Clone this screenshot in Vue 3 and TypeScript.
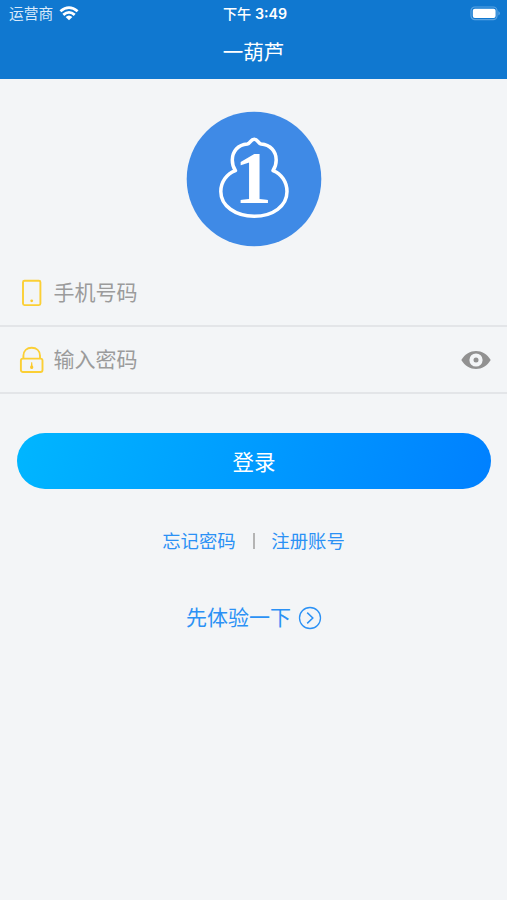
<script setup lang="ts">
import { ref } from 'vue'

const phone = ref('')
const password = ref('')
const passwordVisible = ref(false)
</script>

<template>
  <main class="screen">
    <header class="header">
      <div class="status">
        <div class="carrier">
          <span>运营商</span>
          <svg class="wifi" width="20" height="15" viewBox="0 0 20 15" fill="none" stroke="#fff" stroke-width="2.8">
            <path d="M1.4 5.3Q10 -2 18.6 5.3" />
            <path d="M4.3 8.9Q10 3.9 15.7 8.9" />
            <path d="M6.6 11Q10 8 13.4 11L10 14.2Z" fill="#fff" stroke="none" />
          </svg>
        </div>
        <span class="time">下午 <b>3:49</b></span>
        <svg class="battery" width="31" height="15" viewBox="0 0 31 15">
          <rect x="1" y="1" width="26" height="12.6" rx="3.8" fill="none" stroke="#5ba4e2" stroke-width="1.2" />
          <rect x="2.8" y="2.8" width="22.8" height="9.2" rx="2" fill="#fff" />
          <path d="M28.5 5Q31 7.3 28.5 9.6Z" fill="#72b2e8" />
        </svg>
      </div>
      <h1 class="title">一葫芦</h1>
    </header>

    <svg class="logo" width="136" height="136" viewBox="-1 -1 136 136">
      <circle cx="67" cy="67" r="67.3" fill="#3f8ae6" />
      <path
        d="M67.2 27.2C63.5 27.2 63.6 31.3 60.3 32C51 32.6 45.3 39.5 45.3 48C45.3 52.5 46.2 55.5 48.4 58.6C39.5 62 33.8 70 33.8 79.5C33.8 94 48.5 104.2 67.2 104.2C86 104.2 100 94 100 79.5C100 70 94.6 62 86 58.6C88.2 55.5 89.2 52.5 89.2 48C89.2 39.5 83.4 32.6 74.1 32C70.8 31.3 71 27.2 67.2 27.2Z"
        fill="none" stroke="#fff" stroke-width="3.5" stroke-linejoin="round"
      />
      <text class="logo-digit" x="66.2" y="91" text-anchor="middle">1</text>
    </svg>

    <form class="form" @submit.prevent>
      <label class="field">
        <svg class="field-icon" width="26" height="30" viewBox="0 0 26 30" fill="none" stroke="#fbcf35" stroke-width="1.9">
          <rect x="4" y="2.7" width="17.4" height="24.4" rx="1.5" />
          <circle cx="12.7" cy="22.8" r="1.4" fill="#fbc92c" stroke="none" />
        </svg>
        <input v-model="phone" type="tel" placeholder="手机号码" />
      </label>
      <div class="field">
        <svg class="field-icon" width="26" height="30" viewBox="0 0 26 30" fill="none" stroke="#fbcf35" stroke-width="1.9">
          <path d="M4.4 14V10.8C4.4 5.7 8 2.7 12.7 2.7S21 5.7 21 10.8V14" />
          <rect x="1.9" y="13.6" width="21.6" height="13.4" rx="2" />
          <path d="M12.2 17.2H13.2L13.5 20.5Q14.3 21.2 14.3 22.5Q14.2 24 12.7 24T11.1 22.5Q11.1 21.2 11.9 20.5Z" fill="#fbc92c" stroke="none" />
        </svg>
        <input v-model="password" :type="passwordVisible ? 'text' : 'password'" placeholder="输入密码" />
        <button class="eye" type="button" aria-label="显示密码" @click="passwordVisible = !passwordVisible">
          <svg width="30" height="20" viewBox="0 0 30 20">
            <path d="M0.3 10C7.3 -2 22.7 -2 29.7 10C22.7 22 7.3 22 0.3 10Z" fill="#919191" />
            <circle cx="15" cy="10" r="6.6" fill="#f3f5f7" />
            <circle cx="15" cy="10" r="2.5" fill="#919191" />
          </svg>
        </button>
      </div>
      <button class="submit" type="submit">登录</button>
    </form>

    <nav class="links">
      <a>忘记密码</a>
      <i class="divider" />
      <a>注册账号</a>
    </nav>
    <a class="trial">
      <span>先体验一下</span>
      <svg width="24" height="24" viewBox="0 0 24 24" fill="none" stroke="#2b91f5" stroke-width="1.3">
        <circle cx="12" cy="12" r="10.5" />
        <path d="M9.2 6.6L14.8 12L9.2 17.4" stroke-width="1.5" />
      </svg>
    </a>
  </main>
</template>

<style>
body {
  background: #f3f5f7;
}
</style>

<style scoped>
.screen {
  display: flex;
  flex-direction: column;
  align-items: center;
  min-height: 900px;
  background: #f3f5f7;
  font-family: Inter, 'Noto Sans CJK SC', sans-serif;
}
.header {
  width: 100%;
  height: 79px;
  box-sizing: border-box;
  background: #1078d0;
  color: #fff;
}
.status {
  display: grid;
  grid-template-columns: 1fr auto 1fr;
  align-items: center;
  height: 27px;
  padding: 0 6px 0 9px;
  font-size: 14.7px;
  line-height: 27px;
}
.carrier {
  display: flex;
  align-items: center;
  gap: 6px;
  color: #d9eafa;
}
.carrier span {
  padding-top: 1px;
  line-height: 26px;
}
.time {
  font-size: 14.2px;
  font-weight: 500;
}
.time b {
  font-weight: 600;
}
.battery {
  justify-self: end;
}
.title {
  margin: 0;
  padding-top: 1px;
  text-align: center;
  font-size: 20.5px;
  font-weight: 400;
  line-height: 50px;
}
.logo {
  margin-top: 32px;
}
.logo-digit {
  fill: #fff;
  font: 700 74px 'Liberation Serif', serif;
}
.form {
  display: flex;
  flex-direction: column;
  width: 100%;
  margin-top: 13px;
}
.field {
  display: flex;
  align-items: center;
  box-sizing: border-box;
  height: 67px;
  padding: 0 16px 0 19px;
  border-bottom: 2px solid #e3e5e8;
}
.field-icon {
  flex: none;
  margin-right: 8.5px;
}
.field input {
  flex: 1;
  min-width: 0;
  height: 40px;
  padding: 0;
  border: 0;
  outline: 0;
  background: none;
  color: #333;
  font: inherit;
  font-size: 21px;
}
.field input::placeholder {
  color: #9b9b9b;
  opacity: 1;
}
.eye {
  display: flex;
  padding: 0;
  border: 0;
  background: none;
}
.submit {
  height: 56px;
  margin: 39.4px 16px 0 17px;
  padding: 0 0 2px;
  border: 0;
  border-radius: 28px;
  background: linear-gradient(105deg, #00b6ff, #0080ff);
  color: #fff;
  font: inherit;
  font-size: 21.5px;
}
.links {
  display: flex;
  align-items: center;
  margin-top: 37.6px;
  color: #2b91f5;
  font-size: 18.4px;
  line-height: 28px;
}
.divider {
  width: 2px;
  height: 16px;
  margin: 0 16.5px 0 17px;
  background: #b4b4b4;
}
.trial {
  display: flex;
  align-items: center;
  gap: 7px;
  margin: 47px 0 0 1px;
  color: #2b91f5;
  font-size: 21px;
  line-height: 32px;
}
</style>
